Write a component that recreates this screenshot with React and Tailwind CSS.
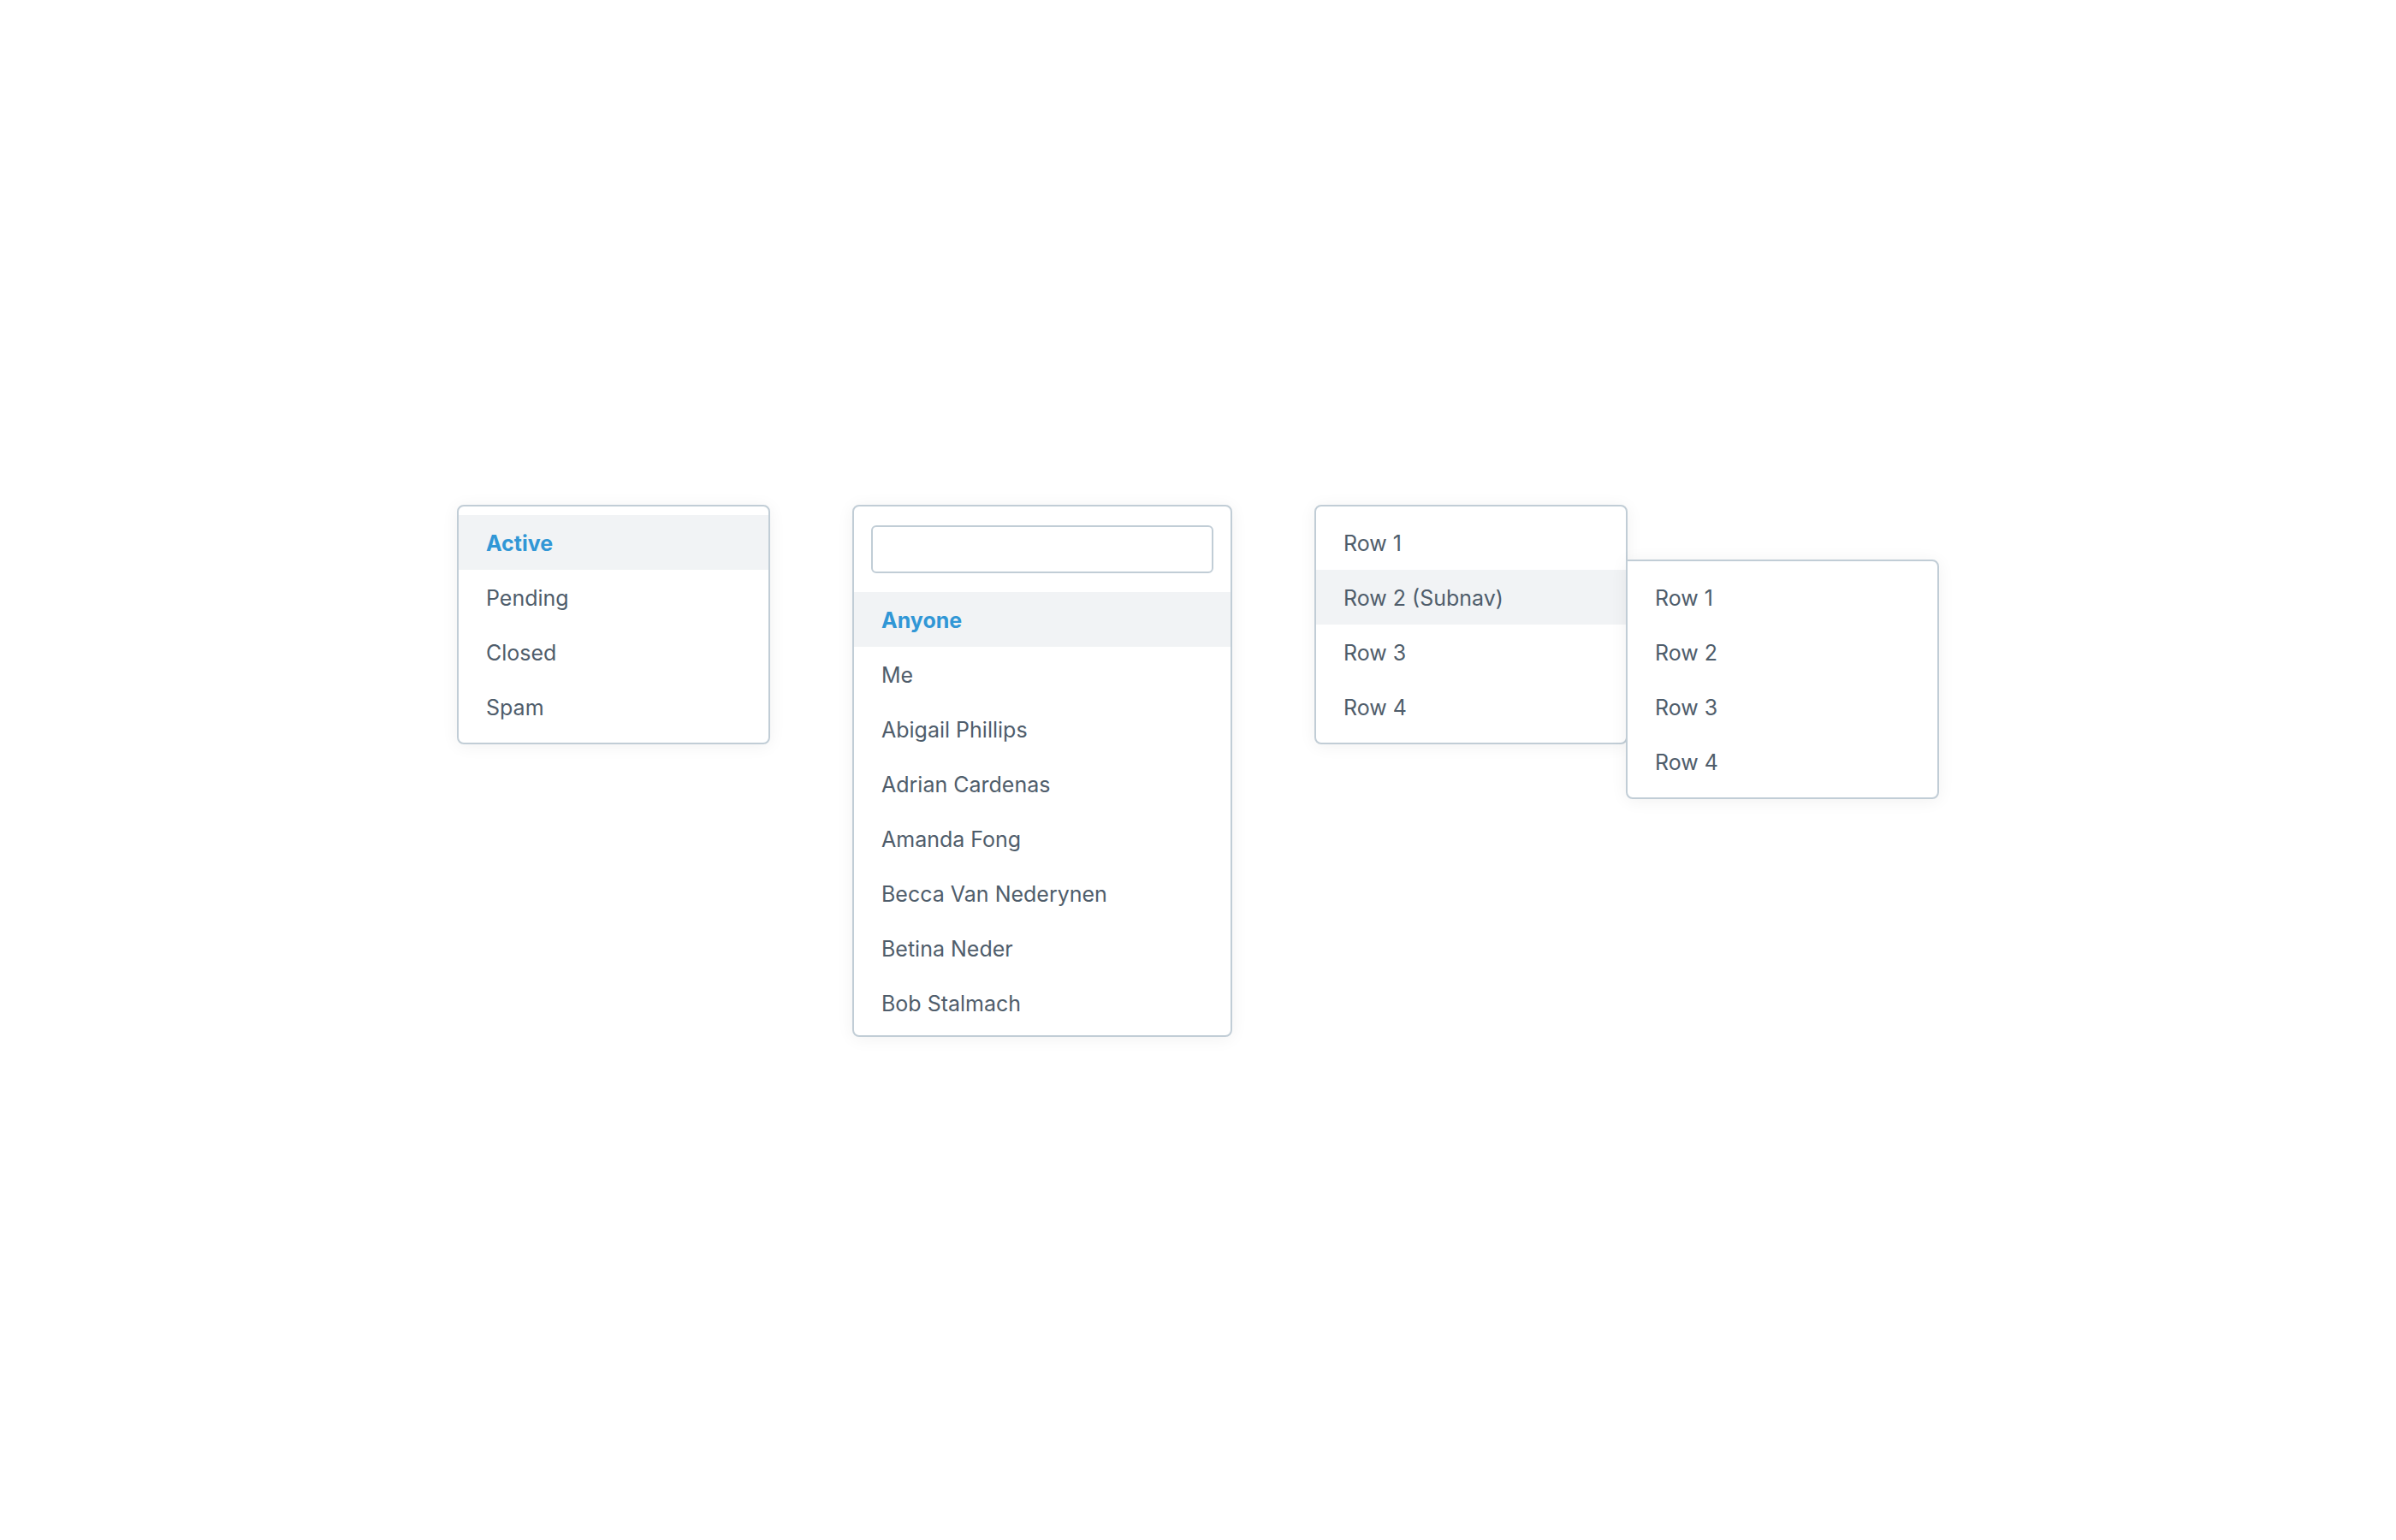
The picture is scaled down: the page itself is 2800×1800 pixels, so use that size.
import React from "react";

const STATUSES = ["Active", "Pending", "Closed", "Spam"];
const PEOPLE = [
  "Anyone",
  "Me",
  "Abigail Phillips",
  "Adrian Cardenas",
  "Amanda Fong",
  "Becca Van Nederynen",
  "Betina Neder",
  "Bob Stalmach",
];
const ROWS = ["Row 1", "Row 2 (Subnav)", "Row 3", "Row 4"];
const SUB_ROWS = ["Row 1", "Row 2", "Row 3", "Row 4"];

const PANEL =
  "border-2 border-[#c1cdd6] bg-white shadow-[0_2px_20px_rgba(0,0,0,0.06)]";

function MenuItem({ label, selected, open }) {
  const tone = selected
    ? "bg-[#f1f3f5] font-bold text-[#3197d6]"
    : open
      ? "bg-[#f1f3f5] text-[#4f5d6b]"
      : "text-[#4f5d6b]";
  return (
    <li>
      <button
        type="button"
        aria-current={selected ? "true" : undefined}
        aria-expanded={open ? "true" : undefined}
        className={`block h-16 w-full px-8 pt-0.5 text-left text-[25px] leading-8 whitespace-nowrap ${tone}`}
      >
        {label}
      </button>
    </li>
  );
}

function Menu({ label, items, selected, open }) {
  return (
    <ul aria-label={label}>
      {items.map((item) => (
        <MenuItem
          key={item}
          label={item}
          selected={item === selected}
          open={item === open}
        />
      ))}
    </ul>
  );
}

export default function App() {
  return (
    <main className="flex min-h-screen items-center justify-center bg-white pt-0.5 font-['Inter',sans-serif]">
      <div className="flex items-start gap-24">
        <div className={`w-[366px] rounded-lg py-2.5 ${PANEL}`}>
          <Menu label="Status" items={STATUSES} selected="Active" />
        </div>

        <div className={`w-[444px] rounded-lg pb-1.5 ${PANEL}`}>
          <div className="px-5 py-[22px]">
            <input
              type="text"
              aria-label="Search people"
              className="block h-14 w-full rounded-md border-2 border-[#c1cdd6] bg-white px-4 text-[25px] text-[#4f5d6b] outline-none"
            />
          </div>
          <Menu label="Assignee" items={PEOPLE} selected="Anyone" />
        </div>

        <div className="flex items-start">
          <div className={`w-[366px] rounded-lg py-2.5 ${PANEL}`}>
            <Menu label="Rows" items={ROWS} open="Row 2 (Subnav)" />
          </div>
          <div
            className={`mt-16 -ml-0.5 w-[366px] rounded-lg rounded-tl-none py-2.5 ${PANEL}`}
          >
            <Menu label="Row 2 submenu" items={SUB_ROWS} />
          </div>
        </div>
      </div>
    </main>
  );
}
